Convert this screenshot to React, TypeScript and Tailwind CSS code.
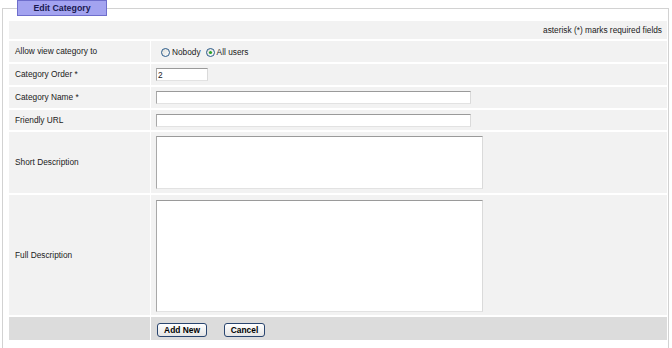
import React from 'react';

const Radio: React.FC<{ checked?: boolean }> = ({ checked }) => (
  <svg width="9" height="9" viewBox="0 0 9 9" className="shrink-0">
    <defs>
      <linearGradient id={checked ? 'rg1' : 'rg0'} x1="0" y1="0" x2="1" y2="1">
        <stop offset="0" stopColor="#dcdcd6" />
        <stop offset="1" stopColor="#ffffff" />
      </linearGradient>
    </defs>
    <circle cx="4.5" cy="4.5" r="4" fill={`url(#${checked ? 'rg1' : 'rg0'})`} stroke="#2a5a8a" strokeWidth="1" />
    {checked && <circle cx="4.5" cy="4.5" r="1.6" fill="#2aa12a" />}
  </svg>
);

const Row: React.FC<{ label: string; h: string; children?: React.ReactNode; top?: boolean }> = ({ label, h, children, top }) => (
  <div className={`grid grid-cols-[141px_1fr] gap-x-px ${h}`}>
    <div className="bg-[#f2f2f2] flex items-center pl-[6px]">{label}</div>
    <div className={`bg-[#f2f2f2] flex pl-[5px] ${top ? 'items-start' : 'items-center'}`}>{children}</div>
  </div>
);

const inputCls =
  'bg-white border border-t-[#9a9a9a] border-l-[#a8a8a8] border-b-[#e2e2e2] border-r-[#dadada] outline-none px-[1px] text-[8.3px] font-["Liberation_Sans",Arial,sans-serif]';

export default function App() {
  return (
    <div className="bg-white w-[672px] h-[348px] overflow-hidden font-['Liberation_Sans',Arial,sans-serif] text-[8.3px] text-[#1a1a1a] leading-none">
      <fieldset className="ml-[2px] w-[667px] border border-b-0 border-[#d2d2d2] pl-[6px] pr-[1px] pt-[5px] pb-[20px]">
        <legend className="ml-[8px] w-[90px] h-[16px] bg-[#a3a3f0] border border-[#6e6ecc] flex items-center justify-center font-bold text-[8.8px] text-[#1a1a50]">
          Edit Category
        </legend>
        <div className="w-[658px] flex flex-col gap-y-[2px]">
          <div className="h-[18px] bg-[#f2f2f2] flex items-center justify-end pr-[5px]">
            asterisk (*) marks required fields
          </div>
          <Row label="Allow view category to" h="h-[21px]">
            <div className="flex items-center ml-[5px] pt-[2px]">
              <Radio />
              <span className="ml-[2px]">Nobody</span>
              <span className="ml-[5px]"><Radio checked /></span>
              <span className="ml-[2px]">All users</span>
            </div>
          </Row>
          <Row label="Category Order *" h="h-[21px]">
            <input className={`${inputCls} w-[52px] h-[13px]`} defaultValue="2" />
          </Row>
          <Row label="Category Name *" h="h-[21px]">
            <input className={`${inputCls} w-[315px] h-[13px]`} />
          </Row>
          <Row label="Friendly URL" h="h-[20px]">
            <input className={`${inputCls} w-[315px] h-[13px]`} />
          </Row>
          <Row label="Short Description" h="h-[61px]" top>
            <textarea className={`${inputCls} w-[327px] h-[53px] mt-[4px] resize-none border-t-dashed`} />
          </Row>
          <Row label="Full Description" h="h-[120px]" top>
            <textarea className={`${inputCls} w-[327px] h-[112px] mt-[5px] resize-none`} />
          </Row>
          <div className="grid grid-cols-[141px_1fr] gap-x-px h-[23px]">
            <div className="bg-[#dcdcdc]" />
            <div className="bg-[#dcdcdc] flex items-center pl-[6px] pt-[3px] gap-[17px]">
              <button className="w-[50px] h-[14px] rounded-[3px] border border-[#29456f] bg-gradient-to-b from-white to-[#e4e4e4] font-bold text-[8.4px] text-black flex items-center justify-center">
                Add New
              </button>
              <button className="w-[41px] h-[14px] rounded-[3px] border border-[#29456f] bg-gradient-to-b from-white to-[#e4e4e4] font-bold text-[8.4px] text-black flex items-center justify-center">
                Cancel
              </button>
            </div>
          </div>
        </div>
      </fieldset>
    </div>
  );
}
